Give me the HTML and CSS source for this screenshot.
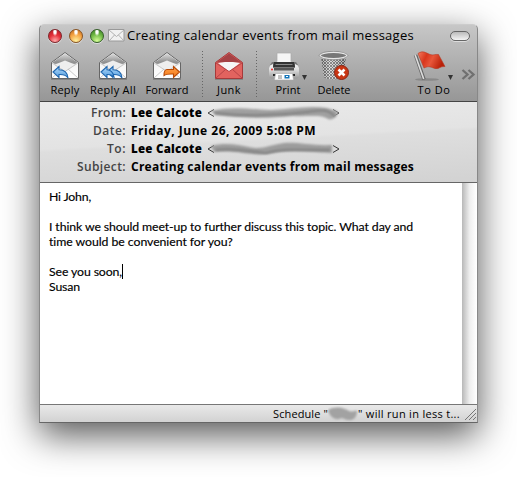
FILE: index.html
```html
<!DOCTYPE html>
<html lang="en">
<head>
<meta charset="utf-8">
<title>Creating calendar events from mail messages</title>
<link rel="stylesheet" href="styles.css">
</head>
<body>
<svg class="defs" width="0" height="0" aria-hidden="true">
  <defs>
    <linearGradient id="flap" x2="0" y2="1"><stop stop-color="#ddd"/><stop offset=".5" stop-color="#8f8f8f"/><stop offset="1" stop-color="#ddd"/></linearGradient>
    <linearGradient id="paper" x2="0" y2="1"><stop stop-color="#eee"/><stop offset="1" stop-color="#fff"/></linearGradient>
    <linearGradient id="blue" x2="0" y2="1"><stop stop-color="#b5dcfa"/><stop offset="1" stop-color="#4f9ade"/></linearGradient>
    <linearGradient id="orange" x2="0" y2="1"><stop stop-color="#ffa04a"/><stop offset="1" stop-color="#f47a16"/></linearGradient>
    <linearGradient id="metal"><stop stop-color="#555"/><stop offset=".35" stop-color="#d8d8d8"/><stop offset=".65" stop-color="#aaa"/><stop offset="1" stop-color="#444"/></linearGradient>
    <linearGradient id="printer" x2="0" y2="1"><stop stop-color="#f4f4f4"/><stop offset=".4" stop-color="#ddd"/><stop offset="1" stop-color="#999"/></linearGradient>
    <linearGradient id="flagred" x2="1" y2=".3"><stop stop-color="#f47b60"/><stop offset=".35" stop-color="#d9361d"/><stop offset=".6" stop-color="#e8563a"/><stop offset="1" stop-color="#b92008"/></linearGradient>
    <pattern id="mesh" width="3" height="3" patternUnits="userSpaceOnUse"><rect width="3" height="3" fill="#ddd"/><path d="M0 0l3 3M3 0L0 3" stroke="#444" stroke-width=".8"/></pattern>
    <filter id="soft" x="-10%" y="-60%" width="120%" height="220%"><feGaussianBlur stdDeviation=".9"/></filter>
    <g id="envelope">
      <path d="M1 28.500h28" stroke="#666" stroke-opacity=".5"/>
      <path d="M1.500 11.500L15 1.500l13.500 10v16h-27z" fill="url(#paper)" stroke="#666"/>
      <path d="M2.500 11.500L15 2.500l12.500 9L15 20z" fill="url(#flap)"/>
      <path d="M5 13.500L15 9.500l10 4-10 7z" fill="#eee"/>
      <path d="M2 12l13 8.500L28 12M2 27l10-9M28 27l-10-9" fill="none" stroke="#bbb" stroke-width=".8"/>
    </g>
  </defs>
</svg>
<main class="window">
  <header class="titlebar">
    <i class="light red"></i><i class="light yellow"></i><i class="light green"></i>
    <svg class="title-icon" width="17" height="13" viewBox="0 0 17 13"><path d="M.5.500h15.500v11.500H.5z" fill="#f1f1f1" stroke="#999"/><path d="M1 1l7.500 6.500L16 1M1 12l5.500-6M16 12l-5.500-6" fill="none" stroke="#aaa" stroke-width=".9"/></svg>
    <h1 class="title">Creating calendar events from mail messages</h1>
    <i class="pill"></i>
  </header>
  <nav class="toolbar">
    <div class="tool"><svg width="30" height="30"><use href="#envelope"/><path d="M3 21l6-5.500v3.200c5 0 8.500 2 9 8.300-2-3.200-5-3.600-9-3.400v3z" fill="url(#blue)" stroke="#1e65ae" stroke-width="1.100"/></svg><span class="reply">Reply</span></div>
    <div class="tool"><svg width="30" height="30"><use href="#envelope"/><path d="M9 21l6-5.500v3.200c5 0 8.500 2 9 8.300-2-3.200-5-3.600-9-3.400v3z" fill="url(#blue)" stroke="#1e65ae" stroke-width="1.100"/><path d="M3 21l6-5.500v3.200c3.500 0 6 2 7 7.300-2-2.400-4-2.600-7-2.400v3z" fill="url(#blue)" stroke="#1e65ae" stroke-width="1.100"/></svg><span class="replyall">Reply All</span></div>
    <div class="tool"><svg width="30" height="30"><use href="#envelope"/><path d="M27.500 21l-6-5.500v3H15c-2 0-3 2-3 6 2-1.500 5-1.700 9.500-1.500v3.500z" fill="url(#orange)" stroke="#b84905" stroke-width="1.100"/></svg><span class="forward">Forward</span></div>
    <i class="divider"></i>
    <div class="tool"><svg width="30" height="30"><path d="M1 28.500h28" stroke="#666" stroke-opacity=".5"/><path d="M1.500 11.500L15 1.500l13.500 10v16h-27z" fill="#e2635f" stroke="#a63a3b"/><path d="M2.500 11.500L15 2.500l12.500 9z" fill="#a54245"/><path d="M4 12l7-1h8l7 1-11 8.500z" fill="#f6f6f6"/><path d="M2 12l13 8.500L28 12M2 27l10-9M28 27l-10-9" fill="none" stroke="#b64447"/></svg><span class="junk">Junk</span></div>
    <i class="divider"></i>
    <div class="tool"><svg width="56" height="30">
      <path d="M10 14l2-3h24l2 3 1 5H9z" fill="#777"/>
      <path d="M17 2h14v8l2 5H15l2-5z" fill="#f5f5f5" stroke="#aaa" stroke-width=".7"/>
      <path d="M14 11h20l1 5H13z" fill="#333"/><path d="M15.500 13.500h17" stroke="#888"/>
      <path d="M10 14.500l3-1.500v4h22v-4l3 1.500 1 2.500v9l-2 1.500H11L9 26v-9z" fill="url(#printer)"/>
      <path d="M14 17h20v2.500H14z" fill="#555"/>
      <path d="M13 23h22v2H13z" fill="#222"/>
      <circle cx="12" cy="18.500" r="1" fill="#e22"/>
      <path d="M15.500 22.500h17l1 6.500h-19z" fill="#fff" stroke="#aaa" stroke-width=".6"/><path d="M24.500 24h5v3.500h-5z" fill="#1676b9"/><path d="M26 25.500h2" stroke="#fff"/><path d="M18 25h4M18 27h4" stroke="#666" stroke-width=".8"/>
      <path d="M42 24h5l-2.500 5z" fill="#333"/></svg><span class="print">Print</span></div>
    <div class="tool"><svg width="36" height="30">
      <path d="M5 5l3 21c1 3 18 3 19 0l3-21z" fill="url(#mesh)"/><path d="M5 5l3 21c1 3 18 3 19 0l3-21z" fill="url(#metal)" opacity=".35"/>
      <ellipse cx="17.500" cy="4.500" rx="13.500" ry="3.400" fill="#777" stroke="#e7e7e7" stroke-width="1.800"/><ellipse cx="17.500" cy="4.500" rx="14.300" ry="4.200" fill="none" stroke="#666" stroke-width=".6"/>
      <circle cx="25.500" cy="21.500" r="7" fill="#c93613" stroke="#8d2513"/><path d="M22.500 18.500l6 6M28.500 18.500l-6 6" stroke="#fff" stroke-width="2.600"/></svg><span class="delete">Delete</span></div>
    <span></span>
    <div class="tool"><svg width="52" height="30">
      <ellipse cx="19" cy="28.500" rx="12" ry="1.300" fill="#555" opacity=".35"/>
      <path d="M7.500 4l8.500 24.500" stroke="#666" stroke-width="3.600"/><path d="M7.200 4l8.500 24" stroke="#ddd" stroke-width="1.600"/>
      <path d="M10 2.500c5-3.500 8-.5 12 1 3 1.200 5-.5 8.500 0l6.500 12c-5-.5-6 3-10 2-4-1.200-6-3-11-.5z" fill="url(#flagred)" stroke="#b33b26" stroke-width=".6"/>
      <path d="M40 24h5l-2.500 5z" fill="#333"/></svg><span class="todo">To Do</span></div>
    <svg class="more" width="17" height="12"><path d="M1.500 1l5 4.500-5 4.500M7.500 1l5 4.500-5 4.500" fill="none" stroke="#707070" stroke-width="2.300"/></svg>
  </nav>
  <section class="headers">
    <b class="key k1">From:</b><div class="value"><b class="name">Lee Calcote</b><svg width="136" height="18"><path d="M9 5.500L3 9l6 3.500M128 5.500l6 3.500-6 3.500" fill="none" stroke="#444"/><path d="M6 7c20-5 36-2 60-1 20-1 38-5 56-2l10 3c2 4-4 10-9 8-7-5-20-2-35-3-28 3-52 2-78-1z" fill="#a0a0a0" filter="url(#soft)"/><path d="M10 9c38 4 68 2 92-1s20-1 28 4" fill="none" stroke="#808080" stroke-width="2" filter="url(#soft)"/></svg></div>
    <b class="key k2">Date:</b><b class="value date">Friday, June 26, 2009 5:08 PM</b>
    <b class="key k3">To:</b><div class="value"><b class="name">Lee Calcote</b><svg width="136" height="18"><path d="M9 5.500L3 9l6 3.500M128 5.500l6 3.500-6 3.500" fill="none" stroke="#333"/><path d="M6 6c15-4 28-1 38 1 14 3 20-2 35-4 15-1 28 3 48 2v8c-24-1-42-4-65 1-18 2-28-4-53-2z" fill="#9d9d9d" filter="url(#soft)"/><path d="M11 10c20-3 32 2 50 3 20-5 36-3 64-3" fill="none" stroke="#808080" stroke-width="2" filter="url(#soft)"/></svg></div>
    <b class="key k4">Subject:</b><b class="value subject">Creating calendar events from mail messages</b>
  </section>
  <article class="message">
    <div class="copy">
      <p class="l1">Hi John,</p>
      <p class="l2">I think we should meet-up to further discuss this topic. What day and</p>
      <p class="l3">time would be convenient for you?</p>
      <p class="l4">See you soon,<i class="caret"></i></p>
      <p class="l5">Susan</p>
    </div>
    <div class="scroll"></div>
  </article>
  <footer class="status">
    <span class="s1">Schedule "</span><svg width="30" height="16"><path d="M0 4c10-5 17-1 21 1 4 2 8-2 8 1-1 10-9 9-15 6C8 15 2 12 0 4z" fill="#a2a2a2" filter="url(#soft)"/></svg><span class="s2">" will run in less t...</span>
    <svg class="grip" width="13" height="14"><path d="M1 13L12 2M5 13l7-7M9 13l3-3" stroke="#777"/></svg>
  </footer>
</main>
<script src="fit.js"></script>
</body>
</html>
```
FILE: styles.css
```css
* { box-sizing: border-box; }
body { margin: 0; padding: 24px 39px 54px; height: 477px; background: #fff; overflow: hidden; font-family: "Open Sans", "Noto Sans", sans-serif; color: #000; }
.defs { position: absolute; }
.window { display: flex; flex-direction: column; width: 439px; height: 399px; border: 1px solid #888; border-top-color: #ccc; border-bottom-color: #666; border-radius: 5px 5px 0 0; box-shadow: 0 12px 36px rgba(0,0,0,.67); background: linear-gradient(#c7c7c7, #969696 77px); white-space: nowrap; }
.titlebar { display: flex; flex: none; align-items: center; height: 21px; padding: 0 7px 0 8px; }
.light { width: 14px; height: 14px; margin-right: 7px; border: 1px solid #555; border-radius: 50%; box-shadow: 0 1px #ddd; }
.red { background: radial-gradient(ellipse at 50% 15%, #fff 0 12%, transparent 30%), radial-gradient(circle at 50% 90%, #ffabab, #e5303a 50%, #a91822); border-color: #7d252a; }
.yellow { background: radial-gradient(ellipse at 50% 15%, #fff 0 12%, transparent 30%), radial-gradient(circle at 50% 90%, #fff2a0, #f5a242 55%, #ba651c); border-color: #875322; }
.green { background: radial-gradient(ellipse at 50% 15%, #fff 0 12%, transparent 30%), radial-gradient(circle at 50% 90%, #d6ff98, #6eb744 55%, #377c21); border-color: #345e28; }
.title-icon { margin-left: -3px; margin-right: 2px; }
.title { margin: 0; font-size: 13px; font-weight: 400; line-height: 21px; }
.pill { width: 20px; height: 10px; margin-left: auto; border: 1px solid #666; border-radius: 5px; background: linear-gradient(#bbb, #f4f4f4); box-shadow: 0 1px #ddd; }
.toolbar { display: grid; flex: none; grid-template-columns: 50px 46px 62px 8px 46px 8px 56px 36px 1fr 52px 17px; height: 56px; padding-top: 5px; border-bottom: 1px solid #444; }
.tool { display: flex; flex-direction: column; align-items: center; font-size: 11px; line-height: 16px; }
.tool svg { flex: none; height: 30px; margin-bottom: 1px; }
.divider { width: 1px; height: 48px; margin-left: 4px; background: repeating-linear-gradient(#666 0 1px, transparent 1px 3px); }
.more { margin: 18px 0 0 1px; }
.headers { display: grid; flex: none; grid-template-columns: 86px 1fr; grid-auto-rows: 18px; column-gap: 5px; height: 81px; padding-top: 2px; border-bottom: 1px solid #666; background: linear-gradient(177deg, #d2d2d2, #dedede 51%, #e3e3e3 54%, #ebebeb); background: linear-gradient(183deg, #ebebeb, #e3e3e3 46%, #dedede 49%, #d2d2d2); font-size: 12px; line-height: 18px; }
.headers { background: linear-gradient(177deg, #ebebeb, #e3e3e3 46%, #dedede 49%, #d2d2d2); }
.key { justify-self: end; color: #444; font-weight: 600; }
.value { display: flex; justify-self: start; font-weight: 700; }
.name { margin-right: 3px; font-size: 11.5px; }
.message { display: flex; flex: none; height: 221px; background: #fff; }
.copy { flex: 1; padding: 6px 9px; font: 12.3px/15px Lato, "Open Sans", sans-serif; -webkit-text-stroke: .15px #000; }
.copy p { width: fit-content; height: 15px; margin: 0; }
.copy .l1, .copy .l3 { margin-bottom: 15px; }
.caret { display: inline-block; width: 1px; height: 15px; vertical-align: top; background: #000; }
.scroll { width: 15px; background: linear-gradient(90deg, #b8b8b8, #eee 50%, #fff); }
.status { display: flex; align-items: center; justify-content: flex-end; flex: 1; min-height: 0; border-top: 1px solid #777; background: linear-gradient(#e9e9e9, #d2d2d2); font-size: 11px; line-height: 17px; }
.grip { margin-left: 4px; }
```
FILE: fit.js
```js
// Spreads each label's letters to its column measure.
const widths = {
  title: 287, reply: 29, replyall: 46, forward: 43, junk: 24, print: 25, delete: 33, todo: 33,
  name: 71, date: 185, subject: 283, k1: 35, k2: 33, k3: 19, k4: 49,
  l1: 42, l2: 364, l3: 184, l4: 74, l5: 31, s1: 55, s2: 102
};
for (const [name, width] of Object.entries(widths)) {
  for (const el of document.querySelectorAll("." + name)) {
    const spacing = (width - el.getBoundingClientRect().width) / el.textContent.length;
    el.style.letterSpacing = spacing + "px";
  }
}
```
